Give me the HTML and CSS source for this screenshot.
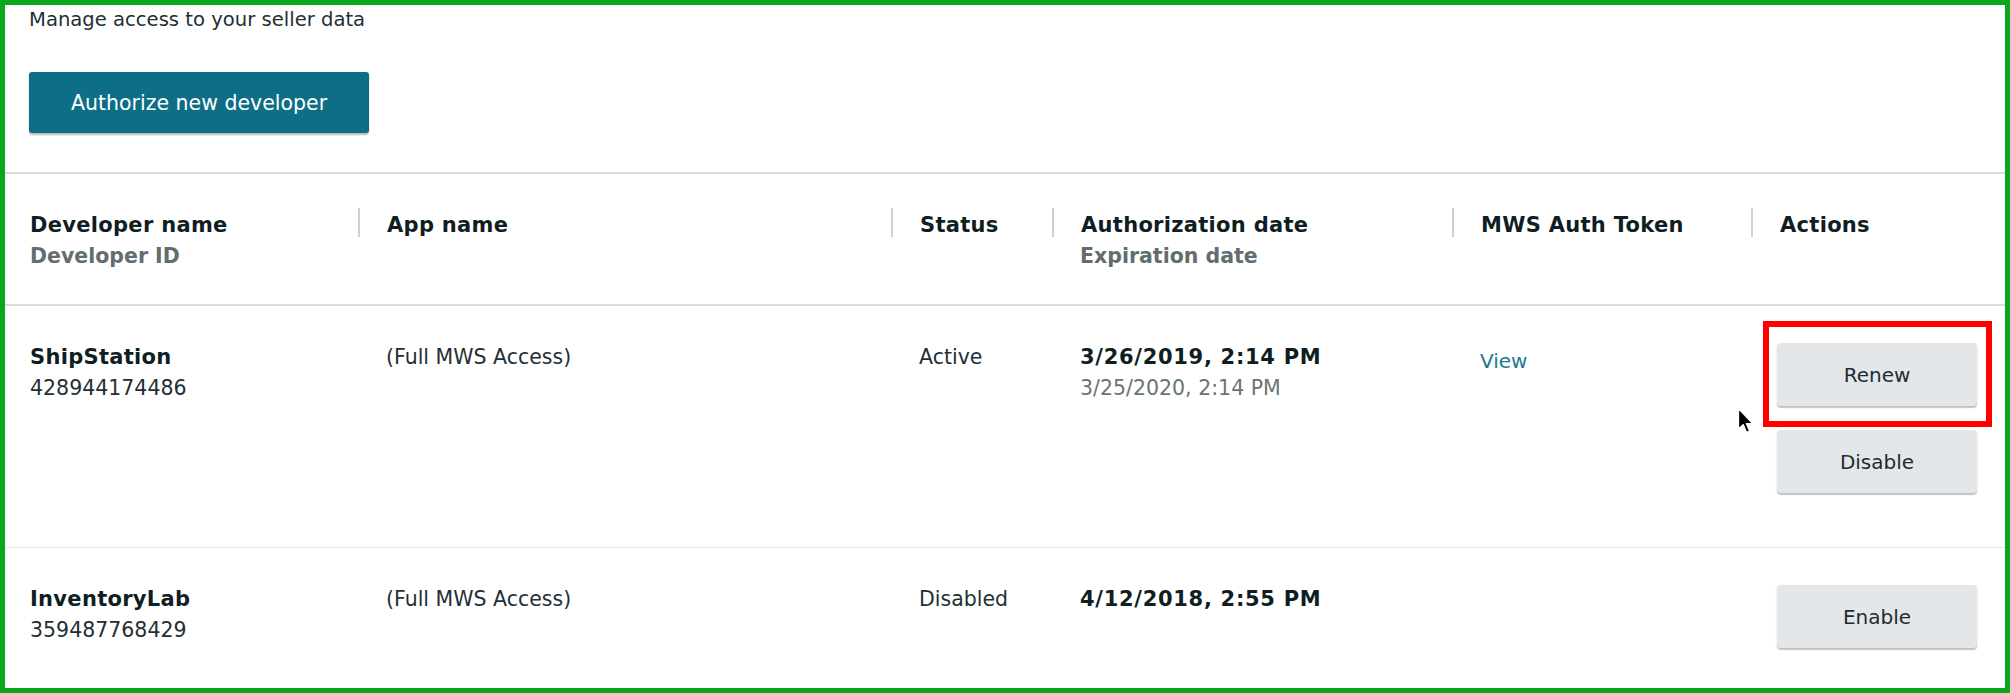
FILE: index.html
```html
<!DOCTYPE html>
<html lang="en">
<head>
<meta charset="utf-8">
<title>Manage access to your seller data</title>
<link rel="stylesheet" href="styles.css">
</head>
<body>
<div class="frame">
  <section class="intro">
    <p class="intro-text">Manage access to your seller data</p>
    <button class="btn-primary" type="button">Authorize new developer</button>
  </section>

  <div class="table">
    <div class="row row-head">
      <div class="th th-first">
        <span class="th-label">Developer name</span>
        <span class="th-sub">Developer ID</span>
      </div>
      <div class="th"><span class="th-label">App name</span></div>
      <div class="th"><span class="th-label">Status</span></div>
      <div class="th">
        <span class="th-label">Authorization date</span>
        <span class="th-sub">Expiration date</span>
      </div>
      <div class="th"><span class="th-label">MWS Auth Token</span></div>
      <div class="th"><span class="th-label">Actions</span></div>
    </div>

    <div class="row row-body">
      <div class="td td-first">
        <span class="line strong">ShipStation</span>
        <span class="line">428944174486</span>
      </div>
      <div class="td"><span class="line">(Full MWS Access)</span></div>
      <div class="td"><span class="line">Active</span></div>
      <div class="td">
        <span class="line strong date">3/26/2019, 2:14 PM</span>
        <span class="line muted">3/25/2020, 2:14 PM</span>
      </div>
      <div class="td"><a class="line link" href="#">View</a></div>
      <div class="td td-actions">
        <div class="btn-wrap">
          <button class="btn" type="button">Renew</button>
          <span class="highlight"></span>
          <svg class="cursor" width="18" height="28" viewBox="0 0 18 28" aria-hidden="true">
            <path d="M1.5 1.5 L1.5 22 L6.2 17.6 L9.6 25.4 L12.6 24.1 L9.3 16.6 L15.6 16.6 Z" fill="#000" stroke="#fff" stroke-width="1.3" stroke-linejoin="round"/>
          </svg>
        </div>
        <button class="btn" type="button">Disable</button>
      </div>
    </div>

    <div class="row row-body">
      <div class="td td-first">
        <span class="line strong">InventoryLab</span>
        <span class="line">359487768429</span>
      </div>
      <div class="td"><span class="line">(Full MWS Access)</span></div>
      <div class="td"><span class="line">Disabled</span></div>
      <div class="td"><span class="line strong date">4/12/2018, 2:55 PM</span></div>
      <div class="td"></div>
      <div class="td td-actions">
        <button class="btn" type="button">Enable</button>
      </div>
    </div>
  </div>
</div>
</body>
</html>
```

FILE: styles.css
```css
* {
  box-sizing: border-box;
}

html, body {
  margin: 0;
  padding: 0;
  background: #ffffff;
}

body {
  font-family: "DejaVu Sans", "Liberation Sans", sans-serif;
  color: #232f35;
}

.frame {
  width: 2010px;
  height: 693px;
  border: 5px solid #0aa61c;
  overflow: hidden;
  background: #ffffff;
}

/* intro */
.intro {
  padding: 3px 24px 39px;
}

.intro-text {
  margin: 0;
  font-size: 19.6px;
  line-height: 24px;
  color: #232f35;
}

.btn-primary {
  display: flex;
  align-items: center;
  justify-content: center;
  margin-top: 40px;
  width: 340px;
  height: 61px;
  border: none;
  border-radius: 3px;
  background: #0d6e85;
  color: #ffffff;
  font-family: "DejaVu Sans", sans-serif;
  font-size: 20.5px;
  box-shadow: 0 2px 2px rgba(0, 0, 0, 0.28);
  padding: 0;
}

/* table */
.row {
  display: grid;
  grid-template-columns: 353px 533px 161px 400px 299px 253px;
}

.row-head {
  height: 134px;
  border-top: 2px solid #dadcdc;
  border-bottom: 2px solid #dadcdc;
}

.row-body {
  border-bottom: 1px solid #e4e6e6;
}

.th {
  padding-top: 34px;
  padding-left: 28px;
}

.th-first {
  padding-left: 25px;
}

.th-label {
  display: block;
  font-weight: bold;
  font-size: 21px;
  line-height: 24px;
  letter-spacing: 0.3px;
  padding-top: 5px;
  color: #0f1e23;
  margin-left: -28px;
  padding-left: 27px;
  border-left: 2px solid #cfd2d2;
}

.th-first .th-label {
  margin-left: 0;
  padding-left: 0;
  border-left: none;
}

.th-sub {
  display: block;
  margin-top: 7px;
  font-weight: bold;
  font-size: 20.5px;
  line-height: 24px;
  color: #636d70;
}

.td {
  padding-top: 36px;
  padding-left: 28px;
}

.td-first {
  padding-left: 25px;
}

.line {
  display: block;
  font-size: 20.5px;
  line-height: 31px;
  color: #232f35;
}

.strong {
  font-weight: bold;
  font-size: 21px;
  letter-spacing: 0.3px;
  color: #0f1e23;
}

.date {
  letter-spacing: 0.7px;
}

.muted {
  color: #6a7476;
}

.link {
  padding-top: 4px;
  font-size: 20px;
  color: #1b7a8e;
  text-decoration: none;
}

.td-actions {
  padding-top: 37px;
  padding-left: 26px;
  padding-bottom: 54px;
  display: flex;
  flex-direction: column;
  gap: 24px;
}

.btn-wrap {
  position: relative;
  width: 200px;
  height: 63px;
}

.btn {
  display: flex;
  align-items: center;
  justify-content: center;
  width: 200px;
  height: 63px;
  padding: 0;
  border: none;
  border-radius: 4px;
  background: #e3e7ea;
  color: #1f2b31;
  font-family: "DejaVu Sans", sans-serif;
  font-size: 20px;
  box-shadow: 0 2px 1px rgba(0, 0, 0, 0.2), 0 1px 3px rgba(0, 0, 0, 0.08);
}

.highlight {
  position: absolute;
  top: -22px;
  left: -14px;
  right: -15px;
  bottom: -21px;
  border: 6px solid #ff0000;
  pointer-events: none;
}

.cursor {
  position: absolute;
  left: -40px;
  top: 64px;
}
```
